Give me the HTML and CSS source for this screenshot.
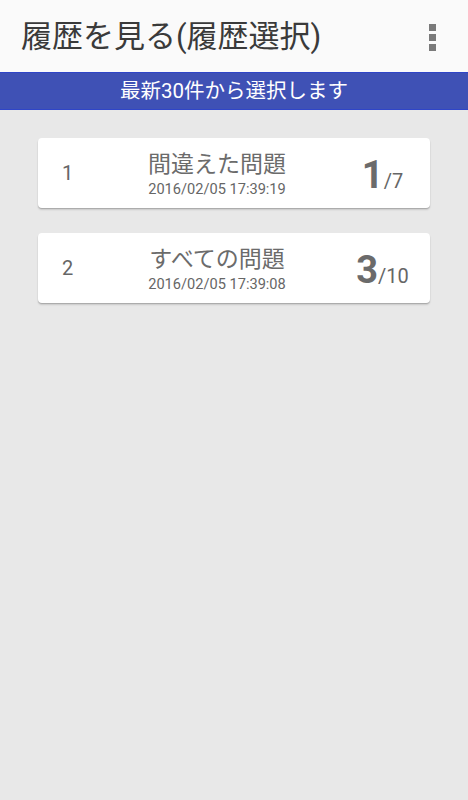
FILE: index.html
```html
<!DOCTYPE html>
<html lang="ja">
<head>
<meta charset="utf-8">
<link rel="stylesheet" href="styles.css">
</head>
<body>
<header class="toolbar">
  <h1 class="title">履歴を見る(履歴選択)</h1>
  <div class="menu"><span></span><span></span><span></span></div>
</header>
<div class="banner">最新30件から選択します</div>
<main class="list">
  <div class="card">
    <div class="num">1</div>
    <div class="info">
      <div class="name">間違えた問題</div>
      <div class="date">2016/02/05 17:39:19</div>
    </div>
    <div class="score"><span class="big">1</span><span class="total">/7</span></div>
  </div>
  <div class="card">
    <div class="num">2</div>
    <div class="info">
      <div class="name">すべての問題</div>
      <div class="date">2016/02/05 17:39:08</div>
    </div>
    <div class="score"><span class="big">3</span><span class="total">/10</span></div>
  </div>
</main>
</body>
</html>
```
FILE: styles.css
```css
html, body {
  margin: 0;
  padding: 0;
  height: 100%;
}
body {
  background: #e8e8e8;
  font-family: Roboto, "Noto Sans CJK JP", sans-serif;
  color: #666;
}
.toolbar {
  height: 72px;
  background: #fafafa;
  display: flex;
  align-items: center;
  justify-content: space-between;
  padding: 0 32px 0 21px;
  box-sizing: border-box;
}
.title {
  margin: 0;
  font-size: 31px;
  font-weight: normal;
  color: #3a3a3a;
  line-height: 1;
  padding-bottom: 0;
}
.menu {
  display: flex;
  flex-direction: column;
  gap: 3px;
  margin-top: 2px;
}
.menu span {
  width: 7px;
  height: 7px;
  background: #7a7a7a;
}
.banner {
  height: 38px;
  box-sizing: border-box;
  background: #3f51b5;
  border-top: 1px solid #2f45c8;
  border-bottom: 1px solid #2f45c8;
  color: #fff;
  font-size: 20.5px;
  display: flex;
  align-items: center;
  justify-content: center;
  line-height: 1;
}
.list {
  display: flex;
  flex-direction: column;
  gap: 25px;
  padding: 28px 38px 0 38px;
}
.card {
  height: 70px;
  background: #fff;
  border-radius: 4px;
  box-shadow: 0 1px 1px rgba(0,0,0,0.18), 0 2px 2px rgba(0,0,0,0.12);
  display: grid;
  grid-template-columns: 61px 1fr 95px;
  align-items: center;
}
.num {
  padding-left: 24px;
  font-size: 20px;
  color: #666;
}
.info {
  display: flex;
  flex-direction: column;
  align-items: center;
  padding-top: 2px;
}
.name {
  font-size: 23px;
  line-height: 28px;
  color: #6b6b6b;
}
.date {
  font-size: 14.6px;
  line-height: 18px;
  margin-top: 1px;
  color: #666;
}
.score {
  text-align: center;
  white-space: nowrap;
  color: #666;
  padding-top: 4px;
}
.big {
  font-size: 38px;
  font-weight: bold;
  color: #6b6b6b;
}
.total {
  font-size: 20px;
}
```
